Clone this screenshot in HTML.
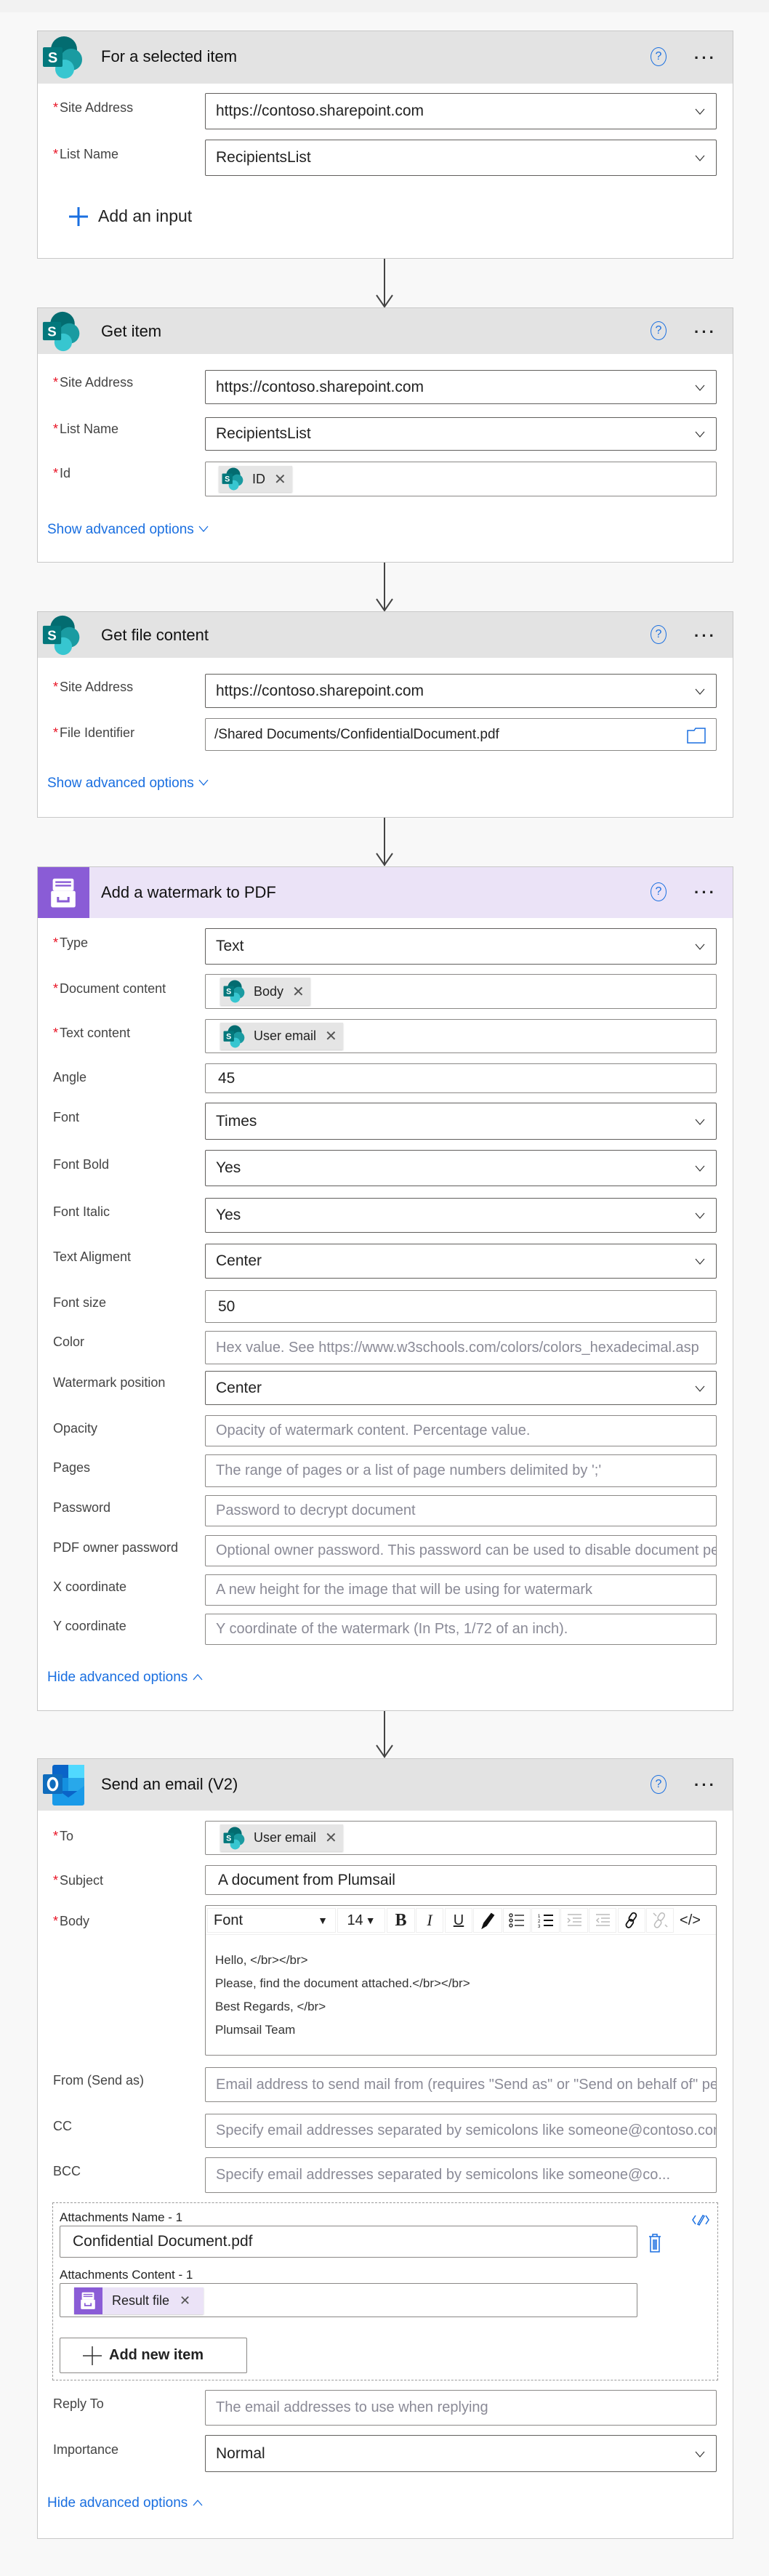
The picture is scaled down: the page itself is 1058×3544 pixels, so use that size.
<!DOCTYPE html>
<html><head><meta charset="utf-8">
<style>
*{box-sizing:border-box;margin:0;padding:0}
body{width:1058px;height:3544px;background:#f8f8f8;font-family:"Liberation Sans",Arial,sans-serif;color:#323130;position:relative;overflow:hidden}
.top{position:absolute;left:0;top:0;width:1058px;height:17px;background:#f2f2f2}
.card{position:absolute;left:51px;width:958px;background:#fff;border:1px solid #c8c8c8}
.hdr{position:absolute;left:0;top:0;width:100%;background:#e3e3e3}
.hdr .t{position:absolute;left:87px;font-size:22px;color:#111}
.help{position:absolute;left:843px;width:22px;height:26px;border:1.5px solid #1a6fe0;border-radius:50%;color:#1a6fe0;font-size:16px;text-align:center;line-height:23px}
.dots{position:absolute;left:903px;font-size:22px;letter-spacing:3px;color:#222;font-weight:bold}
.in{position:absolute;left:282px;width:704px;border:1px solid #8a8886;background:#fff;font-size:21px;padding-left:14px;display:flex;align-items:center;color:#222;white-space:nowrap;overflow:hidden;border-radius:2px}
.dd{border-color:#605e5c}
.ph{color:#8a8a96;font-size:20px}
.chev{position:absolute;right:14px;top:50%;margin-top:-8px}
.lb{position:absolute;left:73px;font-size:18px;color:#444}
.lb b{color:#e81123;font-weight:normal;margin-right:2px}
.link{position:absolute;left:65px;font-size:19px;color:#1a6fe0}
.arrow{position:absolute;left:528px;width:2px;background:#444}
.chip{position:absolute;top:4px;bottom:4px;left:30px;background:#e5e5e5;box-shadow:0 1px 2px rgba(0,0,0,.2);display:flex;align-items:center;padding:0 8px 0 4px;font-size:18px;gap:10px}
.chip .x{font-size:20px;color:#555;margin-left:2px}
.tb{position:absolute;top:3px;height:34px;border:1px solid #eee;display:flex;align-items:center;justify-content:center;font-size:20px}
.bl{position:absolute;left:296px;font-size:17px;color:#333}
</style></head><body>
<div class="top"></div>

<svg width="0" height="0" style="position:absolute">
<defs>
<symbol id="sp" viewBox="0 0 60 60">
<circle cx="30" cy="19" r="18" fill="#036c70"/>
<circle cx="40" cy="33" r="15" fill="#1a9ba1"/>
<circle cx="31" cy="46" r="13" fill="#37c6d0"/>
<rect x="1" y="16" width="27" height="27" rx="2" fill="#03787c"/>
<text x="14.5" y="37" font-size="20" font-family="Liberation Sans,sans-serif" fill="#fff" text-anchor="middle" font-weight="bold">S</text>
</symbol>
<symbol id="pdf" viewBox="0 0 40 40">
<rect x="8" y="4" width="24" height="14" rx="2" fill="#fff"/>
<rect x="11" y="7" width="18" height="2" fill="#8a5cd6"/>
<rect x="11" y="11" width="18" height="2" fill="#8a5cd6"/>
<rect x="6" y="18" width="28" height="19" rx="2" fill="#fff"/>
<path d="M14 25v5h12v-5" stroke="#8a5cd6" stroke-width="2.5" fill="none"/>
</symbol>
<symbol id="chv" viewBox="0 0 16 16"><path d="M2 5l6 7 6-7" stroke="#333" stroke-width="1.2" fill="none"/></symbol>
</defs></svg>

<!-- Card 1 -->
<div class="card" style="top:42px;height:314px">
<div class="hdr" style="height:72px">
<svg style="position:absolute;left:6px;top:6px" width="60" height="60"><use href="#sp"/></svg>
<div class="t" style="top:22px">For a selected item</div>
<div class="help" style="top:22px">?</div>
<div class="dots" style="top:24px">···</div>
</div>
</div>
<div class="lb" style="top:138px"><b>*</b>Site Address</div>
<div class="in dd" style="top:128px;height:50px">https://contoso.sharepoint.com<svg class="chev" width="16" height="16"><use href="#chv"/></svg></div>
<div class="lb" style="top:202px"><b>*</b>List Name</div>
<div class="in dd" style="top:192px;height:50px">RecipientsList<svg class="chev" width="16" height="16"><use href="#chv"/></svg></div>
<svg style="position:absolute;left:94px;top:284px" width="28" height="28"><path d="M14 1v26M1 14h26" stroke="#1a6fe0" stroke-width="3"/></svg>
<div style="position:absolute;left:135px;top:284px;font-size:23px;color:#222">Add an input</div>

<div class="arrow" style="top:356px;height:66px"></div>
<svg style="position:absolute;left:516px;top:402px" width="26" height="22"><path d="M2 4l11 16 11-16" stroke="#444" stroke-width="2" fill="none"/></svg>

<!-- Card 2 -->
<div class="card" style="top:423px;height:351px">
<div class="hdr" style="height:63px">
<svg style="position:absolute;left:6px;top:4px" width="56" height="56"><use href="#sp"/></svg>
<div class="t" style="top:19px">Get item</div>
<div class="help" style="top:18px">?</div>
<div class="dots" style="top:20px">···</div>
</div>
</div>
<div class="lb" style="top:516px"><b>*</b>Site Address</div>
<div class="in dd" style="top:509px;height:47px">https://contoso.sharepoint.com<svg class="chev" width="16" height="16"><use href="#chv"/></svg></div>
<div class="lb" style="top:580px"><b>*</b>List Name</div>
<div class="in dd" style="top:574px;height:46px">RecipientsList<svg class="chev" width="16" height="16"><use href="#chv"/></svg></div>
<div class="lb" style="top:641px"><b>*</b>Id</div>
<div class="in" style="top:635px;height:48px"><div class="chip" style="left:18px;top:5px;bottom:5px"><svg width="32" height="32"><use href="#sp"/></svg>ID<span class="x">✕</span></div></div>
<div class="link" style="top:718px">Show advanced options <svg width="16" height="12"><path d="M2 2l6 7 6-7" stroke="#1a6fe0" stroke-width="1.3" fill="none"/></svg></div>

<div class="arrow" style="top:774px;height:66px"></div>
<svg style="position:absolute;left:516px;top:820px" width="26" height="22"><path d="M2 4l11 16 11-16" stroke="#444" stroke-width="2" fill="none"/></svg>

<!-- Card 3 -->
<div class="card" style="top:841px;height:284px">
<div class="hdr" style="height:63px">
<svg style="position:absolute;left:6px;top:4px" width="56" height="56"><use href="#sp"/></svg>
<div class="t" style="top:19px">Get file content</div>
<div class="help" style="top:18px">?</div>
<div class="dots" style="top:20px">···</div>
</div>
</div>
<div class="lb" style="top:935px"><b>*</b>Site Address</div>
<div class="in dd" style="top:927px;height:47px">https://contoso.sharepoint.com<svg class="chev" width="16" height="16"><use href="#chv"/></svg></div>
<div class="lb" style="top:998px"><b>*</b>File Identifier</div>
<div class="in" style="top:988px;height:45px;font-size:19px;padding-left:12px">/Shared Documents/ConfidentialDocument.pdf<svg style="position:absolute;right:14px;top:12px" width="26" height="22"><path d="M1 4h9l2-3h13v20H1z M1 4v17" stroke="#1a6fe0" stroke-width="1.5" fill="none"/></svg></div>
<div class="link" style="top:1067px">Show advanced options <svg width="16" height="12"><path d="M2 2l6 7 6-7" stroke="#1a6fe0" stroke-width="1.3" fill="none"/></svg></div>

<div class="arrow" style="top:1125px;height:66px"></div>
<svg style="position:absolute;left:516px;top:1170px" width="26" height="22"><path d="M2 4l11 16 11-16" stroke="#444" stroke-width="2" fill="none"/></svg>

<!-- Card 4 -->
<div class="card" style="top:1192px;height:1162px">
<div class="hdr" style="height:70px;background:#ebe3f7">
<div style="position:absolute;left:0;top:0;width:71px;height:70px;background:#8a5cd6"><svg style="position:absolute;left:11px;top:10px" width="48" height="50"><use href="#pdf"/></svg></div>
<div class="t" style="top:22px">Add a watermark to PDF</div>
<div class="help" style="top:21px">?</div>
<div class="dots" style="top:22px">···</div>
</div>
</div>
<div class="lb" style="top:1287px"><b>*</b>Type</div>
<div class="in dd" style="top:1277px;height:50px">Text<svg class="chev" width="16" height="16"><use href="#chv"/></svg></div>
<div class="lb" style="top:1350px"><b>*</b>Document content</div>
<div class="in" style="top:1340px;height:48px"><div class="chip" style="left:20px"><svg width="32" height="34"><use href="#sp"/></svg>Body<span class="x">✕</span></div></div>
<div class="lb" style="top:1411px"><b>*</b>Text content</div>
<div class="in" style="top:1402px;height:47px"><div class="chip" style="left:20px"><svg width="32" height="34"><use href="#sp"/></svg>User email<span class="x">✕</span></div></div>
<div class="lb" style="top:1472px">Angle</div>
<div class="in" style="top:1463px;height:41px;padding-left:17px">45</div>
<div class="lb" style="top:1527px">Font</div>
<div class="in dd" style="top:1517px;height:51px">Times<svg class="chev" width="16" height="16"><use href="#chv"/></svg></div>
<div class="lb" style="top:1592px">Font Bold</div>
<div class="in dd" style="top:1582px;height:50px">Yes<svg class="chev" width="16" height="16"><use href="#chv"/></svg></div>
<div class="lb" style="top:1657px">Font Italic</div>
<div class="in dd" style="top:1648px;height:48px">Yes<svg class="chev" width="16" height="16"><use href="#chv"/></svg></div>
<div class="lb" style="top:1719px">Text Aligment</div>
<div class="in dd" style="top:1711px;height:48px">Center<svg class="chev" width="16" height="16"><use href="#chv"/></svg></div>
<div class="lb" style="top:1782px">Font size</div>
<div class="in" style="top:1775px;height:45px;padding-left:17px">50</div>
<div class="lb" style="top:1836px">Color</div>
<div class="in" style="top:1831px;height:46px"><span class="ph">Hex value. See https://www.w3schools.com/colors/colors_hexadecimal.asp</span></div>
<div class="lb" style="top:1892px">Watermark position</div>
<div class="in dd" style="top:1886px;height:47px">Center<svg class="chev" width="16" height="16"><use href="#chv"/></svg></div>
<div class="lb" style="top:1955px">Opacity</div>
<div class="in" style="top:1947px;height:43px"><span class="ph">Opacity of watermark content. Percentage value.</span></div>
<div class="lb" style="top:2009px">Pages</div>
<div class="in" style="top:2001px;height:45px"><span class="ph">The range of pages or a list of page numbers delimited by ';'</span></div>
<div class="lb" style="top:2064px">Password</div>
<div class="in" style="top:2057px;height:43px"><span class="ph">Password to decrypt document</span></div>
<div class="lb" style="top:2119px">PDF owner password</div>
<div class="in" style="top:2112px;height:43px"><span class="ph">Optional owner password. This password can be used to disable document permissions</span></div>
<div class="lb" style="top:2173px">X coordinate</div>
<div class="in" style="top:2166px;height:43px"><span class="ph">A new height for the image that will be using for watermark</span></div>
<div class="lb" style="top:2227px">Y coordinate</div>
<div class="in" style="top:2220px;height:43px"><span class="ph">Y coordinate of the watermark (In Pts, 1/72 of an inch).</span></div>
<div class="link" style="top:2297px">Hide advanced options <svg width="16" height="12"><path d="M2 10l6-7 6 7" stroke="#1a6fe0" stroke-width="1.3" fill="none"/></svg></div>

<div class="arrow" style="top:2354px;height:64px"></div>
<svg style="position:absolute;left:516px;top:2397px" width="26" height="22"><path d="M2 4l11 16 11-16" stroke="#444" stroke-width="2" fill="none"/></svg>

<!-- Card 5 -->
<div class="card" style="top:2419px;height:1074px">
<div class="hdr" style="height:71px">
<svg style="position:absolute;left:6px;top:7px" width="62" height="58" viewBox="0 0 62 58">
<rect x="14" y="1" width="44" height="54" rx="3" fill="#0a64c8"/>
<rect x="36" y="1" width="22" height="18" fill="#50d9ff"/>
<rect x="14" y="19" width="22" height="18" fill="#1490df"/>
<rect x="36" y="19" width="22" height="18" fill="#28a8ea"/>
<path d="M14 30l22 16 22-16v24a3 3 0 0 1-3 3H17a3 3 0 0 1-3-3z" fill="#1a9ae8"/>
<rect x="1" y="14" width="27" height="27" rx="2" fill="#0f6cbd"/>
<ellipse cx="14.5" cy="27.5" rx="6" ry="8" stroke="#fff" stroke-width="3.5" fill="none"/>
</svg>
<div class="t" style="top:22px">Send an email (V2)</div>
<div class="help" style="top:22px">?</div>
<div class="dots" style="top:23px">···</div>
</div>
</div>
<div class="lb" style="top:2516px"><b>*</b>To</div>
<div class="in" style="top:2505px;height:47px"><div class="chip" style="left:20px"><svg width="32" height="34"><use href="#sp"/></svg>User email<span class="x">✕</span></div></div>
<div class="lb" style="top:2577px"><b>*</b>Subject</div>
<div class="in" style="top:2566px;height:41px;padding-left:17px">A document from Plumsail</div>
<div class="lb" style="top:2633px"><b>*</b>Body</div>
<div class="in" style="top:2621px;height:207px;display:block;padding:0">
<div style="position:absolute;left:0;right:0;top:0;height:40px;border-bottom:1px solid #eee"></div>
<div class="tb" style="left:2px;width:177px;justify-content:space-between;padding:0 10px 0 8px;font-size:20px"><span>Font</span><span style="font-size:14px">▼</span></div>
<div class="tb" style="left:181px;width:66px;font-size:20px">14<span style="font-size:14px;margin-left:3px">▼</span></div>
<div class="tb" style="left:249px;width:39px;font-weight:bold;font-family:'Liberation Serif',serif;font-size:24px">B</div>
<div class="tb" style="left:289px;width:38px;font-style:italic;font-family:'Liberation Serif',serif;font-size:22px">I</div>
<div class="tb" style="left:329px;width:38px;text-decoration:underline;font-size:20px">U</div>
<div class="tb" style="left:368px;width:40px"><svg width="20" height="24"><path d="M3 22l2-6 10-13 3 2-10 14z" stroke="#111" stroke-width="2" fill="#111"/></svg></div>
<div class="tb" style="left:409px;width:38px"><svg width="22" height="22"><g stroke="#333" stroke-width="1.5" fill="none"><circle cx="3" cy="4" r="2"/><circle cx="3" cy="11" r="2"/><circle cx="3" cy="18" r="2"/><path d="M8 4h13M8 11h13M8 18h13"/></g></svg></div>
<div class="tb" style="left:448px;width:39px"><svg width="22" height="22"><g stroke="#111" stroke-width="2" fill="none"><path d="M8 4h13M8 11h13M8 18h13"/></g><text x="0" y="7" font-size="6">1</text><text x="0" y="14" font-size="6">2</text><text x="0" y="21" font-size="6">3</text></svg></div>
<div class="tb" style="left:488px;width:38px"><svg width="22" height="22"><path d="M2 3h19M9 8h12M9 13h12M2 18h19M2 8l3 3-3 3" stroke="#bbb" stroke-width="1.5" fill="none"/></svg></div>
<div class="tb" style="left:527px;width:38px"><svg width="22" height="22"><path d="M2 3h19M9 8h12M9 13h12M2 18h19M6 8l-3 3 3 3" stroke="#bbb" stroke-width="1.5" fill="none"/></svg></div>
<div class="tb" style="left:567px;width:38px"><svg width="22" height="24"><g stroke="#111" stroke-width="1.8" fill="none"><rect x="9" y="1" width="7" height="12" rx="3.5" transform="rotate(35 12 7)"/><rect x="5" y="10" width="7" height="12" rx="3.5" transform="rotate(35 8 16)"/></g></svg></div>
<div class="tb" style="left:606px;width:38px"><svg width="22" height="24"><g stroke="#bbb" stroke-width="1.5" fill="none"><rect x="9" y="1" width="7" height="11" rx="3.5" transform="rotate(35 12 7)"/><rect x="5" y="11" width="7" height="11" rx="3.5" transform="rotate(35 8 16)"/><path d="M2 2l4 4M18 18l3 3"/></g></svg></div>
<div class="tb" style="left:647px;width:39px;border:none;font-size:20px">&lt;/&gt;</div>
</div>
<div class="bl" style="top:2687px">Hello, &lt;/br&gt;&lt;/br&gt;</div>
<div class="bl" style="top:2719px">Please, find the document attached.&lt;/br&gt;&lt;/br&gt;</div>
<div class="bl" style="top:2751px">Best Regards, &lt;/br&gt;</div>
<div class="bl" style="top:2783px">Plumsail Team</div>
<div class="lb" style="top:2852px">From (Send as)</div>
<div class="in" style="top:2844px;height:48px"><span class="ph">Email address to send mail from (requires "Send as" or "Send on behalf of" permission)</span></div>
<div class="lb" style="top:2915px">CC</div>
<div class="in" style="top:2908px;height:47px"><span class="ph">Specify email addresses separated by semicolons like someone@contoso.com</span></div>
<div class="lb" style="top:2977px">BCC</div>
<div class="in" style="top:2968px;height:49px"><span class="ph">Specify email addresses separated by semicolons like someone@co...</span></div>

<div style="position:absolute;left:72px;top:3030px;width:916px;height:245px;border:1px dashed #999"></div>
<div style="position:absolute;left:82px;top:3041px;font-size:17px;color:#222">Attachments Name - 1</div>
<svg style="position:absolute;left:951px;top:3045px" width="26" height="18"><path d="M6 3L2 9l4 6M20 3l4 6-4 6M9 15L16 3l2 1-7 12z" stroke="#1a6fe0" stroke-width="1.5" fill="none"/></svg>
<div class="in" style="left:82px;width:795px;top:3062px;height:44px;padding-left:17px">Confidential Document.pdf</div>
<svg style="position:absolute;left:891px;top:3072px" width="20" height="28"><path d="M2 5h16M7 5V2h6v3M4 5v21h12V5M8 9v14M10 9v14M12 9v14" stroke="#1a6fe0" stroke-width="1.5" fill="none"/></svg>
<div style="position:absolute;left:82px;top:3120px;font-size:17px;color:#222">Attachments Content - 1</div>
<div class="in" style="left:82px;width:795px;top:3141px;height:47px">
<div style="position:absolute;left:19px;top:5px;height:37px;width:178px;background:#ebe3f7;box-shadow:0 1px 2px rgba(0,0,0,.2);display:flex;align-items:center;font-size:18px">
<div style="width:39px;height:37px;background:#8a5cd6;position:relative"><svg style="position:absolute;left:5px;top:4px" width="28" height="28"><use href="#pdf"/></svg></div>
<span style="margin-left:13px">Result file</span><span style="margin-left:14px;color:#555">✕</span></div>
</div>
<div style="position:absolute;left:82px;top:3216px;width:258px;height:49px;border:1px solid #8a8886;border-radius:2px;background:#fff;display:flex;align-items:center;font-size:20px;font-weight:bold;color:#222">
<svg style="margin-left:31px;margin-right:10px" width="26" height="26"><path d="M13 0v26M0 13h26" stroke="#333" stroke-width="1.5"/></svg>Add new item</div>

<div class="lb" style="top:3297px">Reply To</div>
<div class="in" style="top:3288px;height:49px"><span class="ph">The email addresses to use when replying</span></div>
<div class="lb" style="top:3360px">Importance</div>
<div class="in dd" style="top:3350px;height:51px">Normal<svg class="chev" width="16" height="16"><use href="#chv"/></svg></div>
<div class="link" style="top:3433px">Hide advanced options <svg width="16" height="12"><path d="M2 10l6-7 6 7" stroke="#1a6fe0" stroke-width="1.3" fill="none"/></svg></div>
</body></html>
